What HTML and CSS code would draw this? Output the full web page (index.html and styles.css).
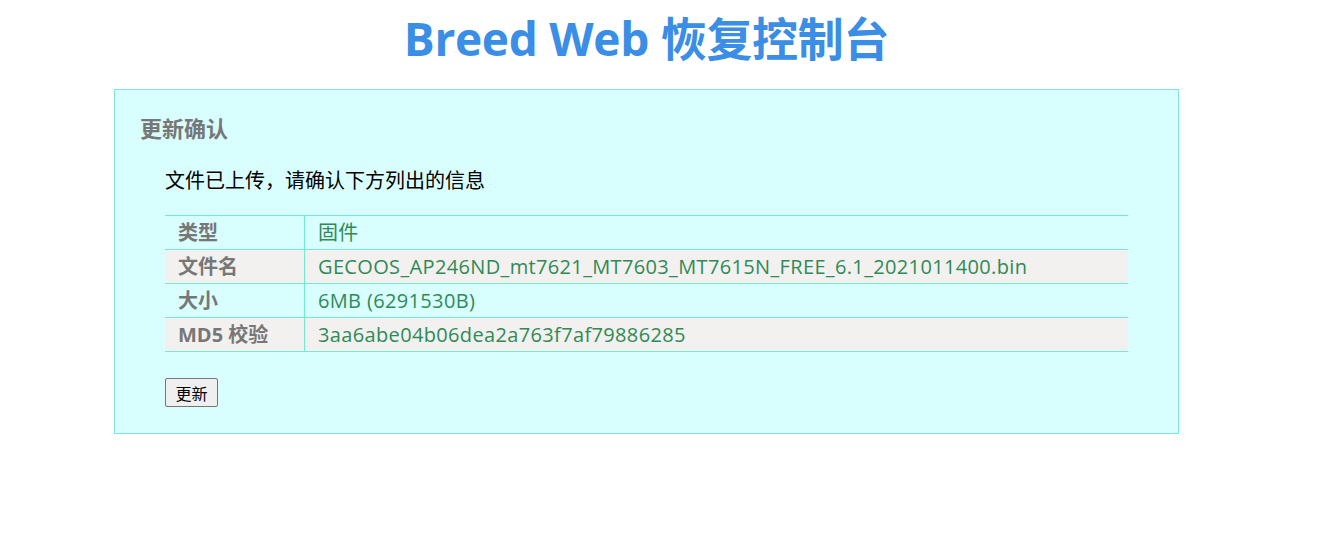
FILE: index.html
```html
<!DOCTYPE html>
<html lang="zh-CN">
<head>
<meta charset="utf-8">
<title>Breed Web 恢复控制台</title>
<link rel="stylesheet" href="styles.css">
</head>
<body>
<div class="wrap">
  <h1 class="title">Breed Web 恢复控制台</h1>
  <div class="panel">
    <h2 class="panel-title">更新确认</h2>
    <div class="panel-body">
      <p class="note">文件已上传，请确认下方列出的信息</p>
      <table class="info">
        <tr><th>类型</th><td>固件</td></tr>
        <tr class="alt"><th>文件名</th><td>GECOOS_AP246ND_mt7621_MT7603_MT7615N_FREE_6.1_2021011400.bin</td></tr>
        <tr><th>大小</th><td>6MB (6291530B)</td></tr>
        <tr class="alt"><th>MD5 校验</th><td>3aa6abe04b06dea2a763f7af79886285</td></tr>
      </table>
      <button class="btn" type="button">更新</button>
    </div>
  </div>
</div>
</body>
</html>
```
FILE: styles.css
```css
html, body {
  margin: 0;
  padding: 0;
  background: #ffffff;
}
body {
  padding: 8px;
  font-family: "Open Sans", "Noto Sans CJK SC", sans-serif;
}
.wrap {
  width: 1065px;
  margin-left: 106px;
}
.title {
  margin: 0 0 21px;
  text-align: center;
  font-size: 46px;
  line-height: 60px;
  font-weight: bold;
  color: #3a8ee6;
  letter-spacing: -0.3px;
}
.panel {
  background: #d9fefe;
  border: 1px solid #80ead6;
  padding: 21px 25px 26px;
}
.panel-title {
  margin: 0;
  font-size: 22px;
  line-height: 34px;
  font-weight: bold;
  color: #777777;
}
.panel-body {
  margin: 0 25px;
}
.note {
  margin: 23px 0 21px;
  font-size: 20px;
  line-height: 26px;
  color: #000;
}
.info {
  width: 100%;
  border-collapse: collapse;
  font-size: 20px;
}
.info th, .info td {
  height: 33px;
  padding: 0 13px;
  line-height: 26px;
  border-top: 1px solid #72eccf;
  border-bottom: 1px solid #72eccf;
  text-align: left;
  vertical-align: middle;
}
.info th {
  width: 113px;
  color: #777777;
  font-weight: bold;
  border-right: 1px solid #72eccf;
}
.info td {
  color: #2e8b57;
  font-weight: normal;
  letter-spacing: 0.35px;
}
.info tr.alt th, .info tr.alt td {
  background: #f3f1ef;
}
.btn {
  display: block;
  margin-top: 26px;
  height: 29px;
  padding: 0 9.5px;
  font-family: "Noto Sans CJK SC", sans-serif;
  font-size: 16px;
  color: #000;
  background: #efefef;
  border: 1px solid #767676;
  border-radius: 2px;
}
```
